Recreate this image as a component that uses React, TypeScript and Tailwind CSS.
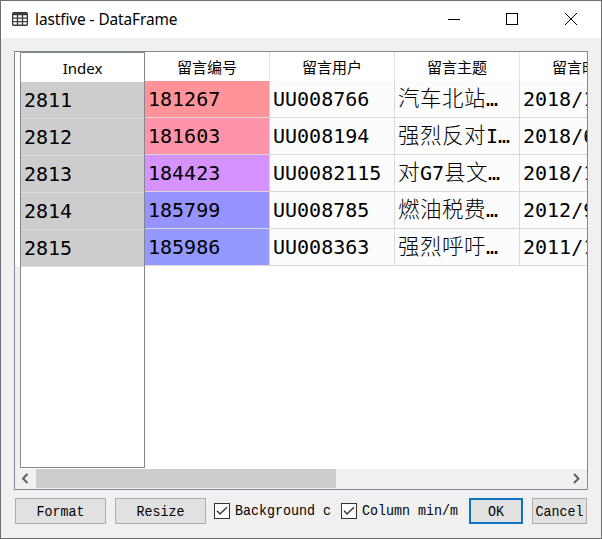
import React from 'react';

const rows = [
  { index: '2811', id: '181267', bg: 'bg-[#ff9399]', user: 'UU008766', topic: '汽车北站…', time: '2018/1' },
  { index: '2812', id: '181603', bg: 'bg-[#ff93a9]', user: 'UU008194', topic: '强烈反对I…', time: '2018/6' },
  { index: '2813', id: '184423', bg: 'bg-[#d693ff]', user: 'UU0082115', topic: '对G7县文…', time: '2018/1' },
  { index: '2814', id: '185799', bg: 'bg-[#9693ff]', user: 'UU008785', topic: '燃油税费…', time: '2012/9' },
  { index: '2815', id: '185986', bg: 'bg-[#9399ff]', user: 'UU008363', topic: '强烈呼吁…', time: '2011/1' },
];
const headers = ['留言编号', '留言用户', '留言主题', '留言时间'];

const ui = "font-['Noto_Sans','Noto_Sans_CJK_SC',sans-serif]";
const mono = "font-['DejaVu_Sans_Mono','Noto_Sans_CJK_SC',monospace] text-[20px] leading-[36px]";
const serifMono = "font-['Liberation_Mono',monospace] text-[13.33px]";

function Topic({ text }: { text: string }) {
  return (
    <span className="flex h-9">
      {text.split('').map((ch, i) =>
        ch > '\u2fff' ? (
          <span key={i} className="-mt-[2px] w-[22px] shrink-0 font-['Noto_Sans_CJK_SC',sans-serif] text-[21.5px] font-light leading-[36px]">
            {ch}
          </span>
        ) : (
          <span key={i}>{ch}</span>
        ),
      )}
    </span>
  );
}

function Button({ label, size, primary }: { label: string; size: string; primary?: boolean }) {
  return (
    <button
      className={`${serifMono} ${size} flex h-[26px] shrink-0 items-center justify-center bg-[#e1e1e1] pt-[3px] text-black ${
        primary ? 'border-2 border-[#0c73c2]' : 'border border-[#adadad]'
      }`}
    >
      <span className="scale-y-110">{label}</span>
    </button>
  );
}

function Check({ label, width }: { label: string; width: string }) {
  return (
    <label className={`${serifMono} ${width} flex h-[26px] shrink-0 items-center text-black`}>
      <span className="-mt-px mr-[5px] flex size-4 shrink-0 items-center justify-center border border-[#333] bg-white">
        <svg width="14" height="14" viewBox="0 0 14 14" fill="none" stroke="#333" strokeWidth="1.4">
          <path d="M2 6.7 5 9.9 12 3.2" />
        </svg>
      </span>
      <span className="scale-y-110 whitespace-pre pt-[2px]">{label}</span>
    </label>
  );
}

export default function App() {
  return (
    <div className="flex h-[539px] w-[602px] flex-col overflow-hidden border border-[#6f6f6f] bg-[#f0f0f0] text-black">
      <header className={`${ui} flex h-[37px] shrink-0 items-center bg-white pl-[11px]`}>
        <svg className="-mt-px" width="16" height="14" viewBox="0 0 16 14">
          <rect width="16" height="14" rx="1.5" fill="#3d3d3d" />
          <path
            d="M1.3 3.3h3.5v2.3H1.3zM6.2 3.3h3.6v2.3H6.2zM11.2 3.3h3.5v2.3h-3.5zM1.3 6.8h3.5V9H1.3zM6.2 6.8h3.6V9H6.2zM11.2 6.8h3.5V9h-3.5zM1.3 10.3h3.5v2.3H1.3zM6.2 10.3h3.6v2.3H6.2zM11.2 10.3h3.5v2.3h-3.5z"
            fill="#fff"
          />
        </svg>
        <span className="ml-[7px] text-[15.4px] leading-5 tracking-[-0.08px]">lastfive - DataFrame</span>
        <svg className="ml-auto mr-[22px] -mt-px" width="132" height="14" viewBox="0 0 132 14" fill="none" stroke="#000" shapeRendering="crispEdges">
          <path d="M1 7.5h12M59.5 1.5h11v11h-11z" />
          <path d="m118 1 12 12M130 1l-12 12" shapeRendering="auto" />
        </svg>
      </header>

      <main className="ml-[13px] mt-[13px] flex h-[439px] w-[574px] shrink-0 flex-col overflow-hidden border border-[#828790] bg-white">
        <div className="flex h-[417px] shrink-0">
          <div className="w-[5px] shrink-0 bg-gradient-to-b from-white from-[214px] to-[#f0f0f0] to-[214px]" />
          <section className="h-[416px] w-[125px] shrink-0 border border-[#828790] bg-white">
            <div className={`${ui} flex h-[29px] items-center justify-center pt-px text-[15px]`}>Index</div>
            {rows.map((r) => (
              <div key={r.index} className={`${mono} h-[37px] border-b border-[#dedede] bg-[#cdcdcd] pl-[3px]`}>
                {r.index}
              </div>
            ))}
          </section>
          <section className="w-[442px] overflow-hidden">
            <div className={`${ui} grid h-[29px] w-[500px] grid-cols-4`}>
              {headers.map((h) => (
                <div key={h} className="flex items-center justify-center border-r border-[#e5e5e5] pt-px text-[15px]">
                  {h}
                </div>
              ))}
            </div>
            {rows.map((r) => (
              <div key={r.id} className={`${mono} grid h-[37px] w-[500px] grid-cols-4 whitespace-nowrap bg-[#fcfcfc]`}>
                <div className={`${r.bg} border-b border-r border-[#d8d8d8] pl-[3px]`}>{r.id}</div>
                <div className="border-b border-r border-[#d8d8d8] pl-[3px]">{r.user}</div>
                <div className="border-b border-r border-[#d8d8d8] pl-[3px]">
                  <Topic text={r.topic} />
                </div>
                <div className="border-b border-[#d8d8d8] pl-[3px]">{r.time}</div>
              </div>
            ))}
          </section>
        </div>
        <div className="flex h-[20px] shrink-0 items-center bg-[#f0f0f0]">
          <svg className="mx-[5px] -mt-px shrink-0" width="11" height="11" viewBox="0 0 11 11" fill="none" stroke="#606060" strokeWidth="2">
            <path d="M7.5 1 3 5.5 7.5 10" />
          </svg>
          <div className="h-[19px] w-[300px] -mt-px bg-[#cdcdcd]" />
          <svg className="-mt-px ml-auto mr-[5px] shrink-0" width="11" height="11" viewBox="0 0 11 11" fill="none" stroke="#606060" strokeWidth="2">
            <path d="M3 1 7.5 5.5 3 10" />
          </svg>
        </div>
      </main>

      <footer className="ml-[14px] mt-2 flex shrink-0">
        <Button label="Format" size="w-[91px] mr-[9px]" />
        <Button label="Resize" size="w-[91px] mr-[8px]" />
        <Check label="Background c" width="w-[127px]" />
        <Check label="Column min/m" width="w-[128px]" />
        <Button label="OK" size="w-[54px] mr-[9px]" primary />
        <Button label="Cancel" size="w-[55px]" />
      </footer>
    </div>
  );
}
